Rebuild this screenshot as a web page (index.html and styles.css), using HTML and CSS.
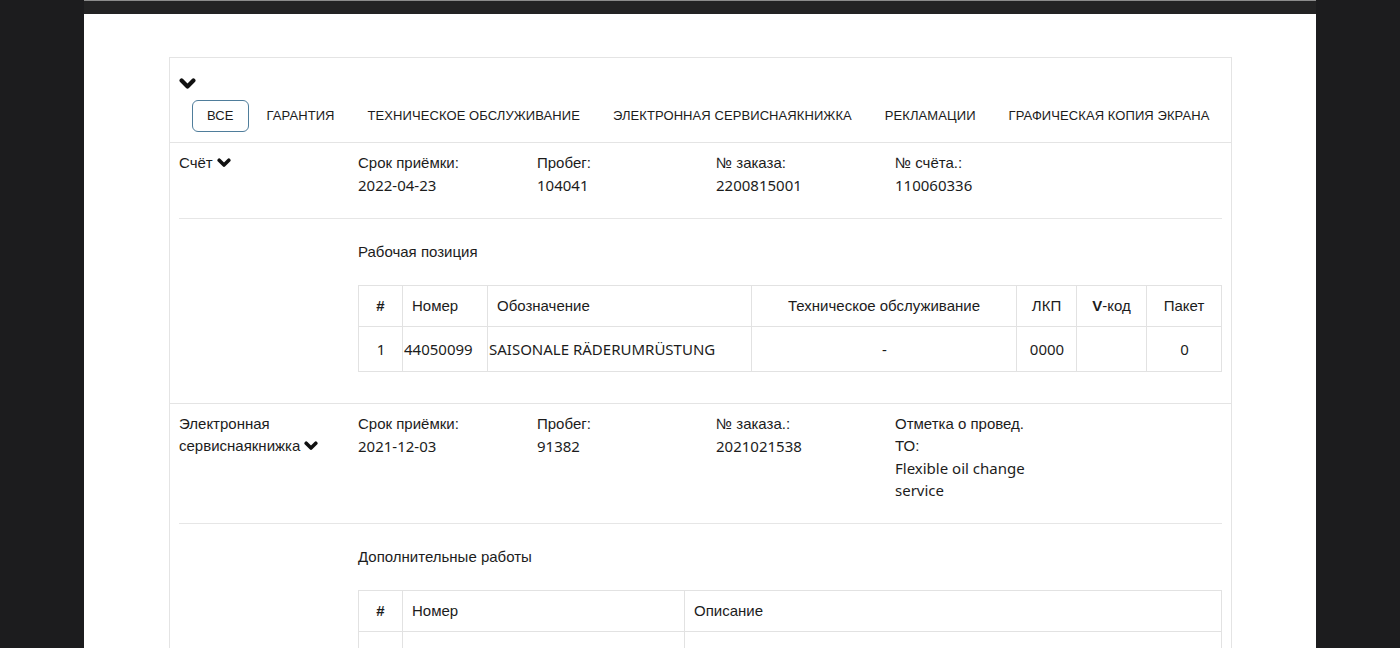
FILE: index.html
```html
<!DOCTYPE html>
<html lang="ru">
<head>
  <meta charset="UTF-8">
  <title>История сервиса</title>
  <link rel="stylesheet" href="styles.css">
</head>
<body>
  <div class="page">
    <div class="topBar"></div>
    <div class="sheet">
      <div class="card">

        <!-- Фильтр -->
        <div class="cardHead">
          <svg class="chevron chevronBig" viewBox="0 0 17 12"><polyline points="2.6,2.6 8.5,8.5 14.4,2.6"/></svg>
          <div class="tabs">
            <span class="tab active">ВСЕ</span>
            <span class="tab">ГАРАНТИЯ</span>
            <span class="tab">ТЕХНИЧЕСКОЕ ОБСЛУЖИВАНИЕ</span>
            <span class="tab">ЭЛЕКТРОННАЯ СЕРВИСНАЯКНИЖКА</span>
            <span class="tab">РЕКЛАМАЦИИ</span>
            <span class="tab">ГРАФИЧЕСКАЯ КОПИЯ ЭКРАНА</span>
          </div>
        </div>

        <!-- Счёт -->
        <div class="section">
          <div class="sectionTop">
            <div class="sectionName">Счёт <svg class="chevron" viewBox="0 0 14 10"><polyline points="2.2,2.2 7,7 11.8,2.2"/></svg></div>
            <div class="field"><div class="label">Срок приёмки:</div><div class="value">2022-04-23</div></div>
            <div class="field"><div class="label">Пробег:</div><div class="value">104041</div></div>
            <div class="field"><div class="label">№ заказа:</div><div class="value">2200815001</div></div>
            <div class="field"><div class="label">№ счёта.:</div><div class="value">110060336</div></div>
          </div>
          <div class="sectionBody">
            <div class="blockTitle">Рабочая позиция</div>
            <table class="grid">
              <colgroup>
                <col style="width:44px"><col style="width:85px"><col style="width:264px"><col style="width:265px"><col style="width:60px"><col style="width:70px"><col style="width:75px">
              </colgroup>
              <tr>
                <th class="center"><b>#</b></th>
                <th>Номер</th>
                <th>Обозначение</th>
                <th class="center">Техническое обслуживание</th>
                <th class="center">ЛКП</th>
                <th class="center"><b>V</b>-код</th>
                <th class="center">Пакет</th>
              </tr>
              <tr>
                <td class="center">1</td>
                <td>44050099</td>
                <td>SAISONALE RÄDERUMRÜSTUNG</td>
                <td class="center">-</td>
                <td class="center">0000</td>
                <td></td>
                <td class="center">0</td>
              </tr>
            </table>
          </div>
        </div>

        <!-- Электронная сервиснаякнижка -->
        <div class="section">
          <div class="sectionTop">
            <div class="sectionName">Электронная сервиснаякнижка <svg class="chevron" viewBox="0 0 14 10"><polyline points="2.2,2.2 7,7 11.8,2.2"/></svg></div>
            <div class="field"><div class="label">Срок приёмки:</div><div class="value">2021-12-03</div></div>
            <div class="field"><div class="label">Пробег:</div><div class="value">91382</div></div>
            <div class="field"><div class="label">№ заказа.:</div><div class="value">2021021538</div></div>
            <div class="field"><div class="label">Отметка о провед. ТО:</div><div class="value">Flexible oil change service</div></div>
          </div>
          <div class="sectionBody">
            <div class="blockTitle">Дополнительные работы</div>
            <table class="grid">
              <colgroup>
                <col style="width:44px"><col style="width:282px"><col style="width:537px">
              </colgroup>
              <tr>
                <th class="center"><b>#</b></th>
                <th>Номер</th>
                <th>Описание</th>
              </tr>
              <tr>
                <td class="center">&nbsp;</td>
                <td></td>
                <td></td>
              </tr>
            </table>
          </div>
        </div>

      </div>
    </div>
  </div>
</body>
</html>
```

FILE: styles.css
```css
html, body {
  margin: 0;
  height: 100%;
  overflow: hidden;
  background-color: #1c1c1e;
  font-family: "Liberation Sans", Arial, sans-serif;
  color: #1c1c1c;
}

.page {
  margin: 0 84px;
  height: 100%;
  display: flex;
  flex-direction: column;
}

.topBar {
  height: 13px;
  flex: none;
  background-color: #232324;
  border-top: 1px solid #8c8c8c;
}

.sheet {
  flex: 1;
  background-color: #fff;
  padding: 43px 84px 0 85px;
}

.card {
  border: 1px solid #e4e4e4;
  border-bottom: none;
}

.chevron {
  width: 14px;
  height: 10px;
  fill: none;
  stroke: #111;
  stroke-width: 3.6;
  stroke-linecap: round;
  stroke-linejoin: round;
  vertical-align: 0;
}

.chevronBig {
  display: block;
  width: 17px;
  height: 12px;
  stroke-width: 4.2;
}

.cardHead {
  padding: 20px 9px 10px;
  border-bottom: 1px solid #e4e4e4;
}

.tabs {
  display: flex;
  margin: 10px 0 0 13px;
}

.tab {
  font-size: 13px;
  letter-spacing: 0.08px;
  line-height: 30px;
  padding: 0 14px;
  margin-right: 3px;
  border: 1px solid transparent;
  border-radius: 6px;
  white-space: nowrap;
}

.tab.active {
  border-color: #4f7d9b;
}

.section {
  padding: 0 9px 31px;
  border-bottom: 1px solid #e4e4e4;
}

.sectionTop {
  display: grid;
  grid-template-columns: repeat(5, 179px);
  padding: 9px 0 22px;
  border-bottom: 1px solid #e6e6e6;
  font-size: 15px;
  line-height: 22px;
}

.sectionName,
.field {
  padding-right: 30px;
}

.value {
  font-family: "Noto Sans", "Open Sans", sans-serif;
}

.sectionBody {
  padding-left: 179px;
}

.blockTitle {
  font-size: 15px;
  line-height: 22px;
  margin: 22px 0;
}

.grid {
  width: 863px;
  table-layout: fixed;
  border-collapse: collapse;
  font-size: 15px;
  line-height: 22px;
}

.grid th,
.grid td {
  border: 1px solid #e2e2e2;
  text-align: left;
  white-space: nowrap;
  overflow: hidden;
}

.grid th {
  font-weight: normal;
  padding: 9px 9px;
}

.grid td {
  font-family: "Noto Sans", "Open Sans", sans-serif;
  padding: 11px 0 11px 1px;
}

.grid .center {
  text-align: center;
}
```
